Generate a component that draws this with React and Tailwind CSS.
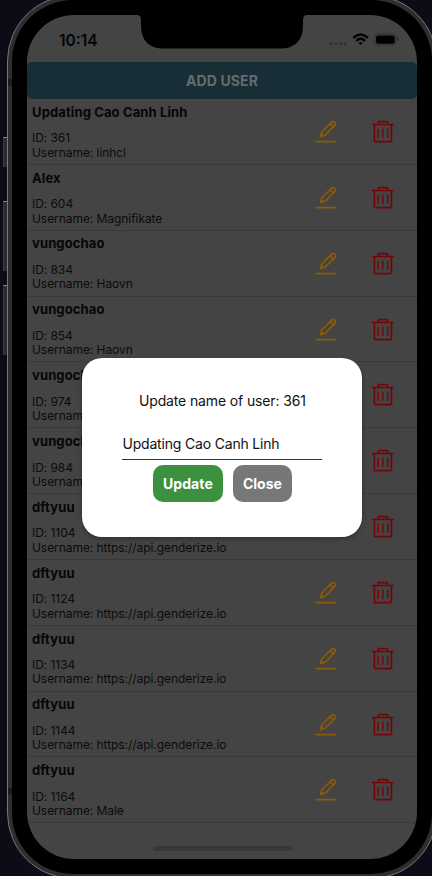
import React from "react";

const users = [
  { name: "Updating Cao Canh Linh", id: 361, username: "linhcl" },
  { name: "Alex", id: 604, username: "Magnifikate" },
  { name: "vungochao", id: 834, username: "Haovn" },
  { name: "vungochao", id: 854, username: "Haovn" },
  { name: "vungochao", id: 974, username: "Haovn" },
  { name: "vungochao", id: 984, username: "Haovn" },
  { name: "dftyuu", id: 1104, username: "https://api.genderize.io" },
  { name: "dftyuu", id: 1124, username: "https://api.genderize.io" },
  { name: "dftyuu", id: 1134, username: "https://api.genderize.io" },
  { name: "dftyuu", id: 1144, username: "https://api.genderize.io" },
  { name: "dftyuu", id: 1164, username: "Male" },
];

function EditIcon() {
  return (
    <svg width="24" height="24" viewBox="0 0 24 24" fill="none" stroke="#8a5b08" strokeWidth="1.7" strokeLinecap="round" strokeLinejoin="round">
      <path d="M2.2 22.6H21.9" />
      <path d="M6.6 17.7L7.7 13L17.3 3.4Q19 1.9 20.7 3.3Q22.1 5 20.7 6.7L11.2 16.2Z" />
      <path d="M16.4 4.8L19.4 7.8" />
      <path d="M6.9 17.3L8.4 15.8" strokeWidth="2" />
    </svg>
  );
}

function TrashIcon() {
  return (
    <svg width="24" height="24" viewBox="0 0 24 24" fill="none" stroke="#760407" strokeWidth="1.7" strokeLinecap="round" strokeLinejoin="round">
      <path d="M1.7 5.5H22.1" />
      <path d="M7.2 5.2V3.3Q7.2 2.6 7.9 2.6H15.9Q16.6 2.6 16.6 3.3V5.2" />
      <path d="M3.4 5.5V21.7Q3.4 22.6 4.3 22.6H19.5Q20.4 22.6 20.4 21.7V5.5" />
      <path d="M7.1 10.2V18.2M11.9 10.2V18.2M16.7 10.2V18.2" strokeWidth="1.4" />
    </svg>
  );
}

function StatusBar() {
  return (
    <div className="relative flex h-[47px] items-center justify-between pl-[32px] pr-[18px] pt-[3px]">
      <span className="pt-px text-[15.5px] leading-[20px] font-semibold text-[#040404]">10:14</span>
      <div className="absolute left-[114px] top-0 h-[34px] w-[162px]">
        <svg width="170" height="34" viewBox="0 0 170 34" className="-ml-[4px] max-w-none" fill="#000">
          <path d="M0 0Q4 0 4 5V12Q5 33.5 27 33.5H143Q165 33.5 166 12V5Q166 0 170 0Z" />
        </svg>
      </div>
      <div className="flex items-center">
        <svg width="71" height="14" viewBox="0 0 71 14">
          <g fill="#343434">
            <circle cx="3.3" cy="10.7" r="1.6" />
            <circle cx="8" cy="10.7" r="1.6" />
            <circle cx="12.7" cy="10.7" r="1.6" />
            <circle cx="17.4" cy="10.7" r="1.6" />
          </g>
          <g fill="none" stroke="#000" strokeWidth="2.3">
            <path d="M25.3 4.8Q32.6 -1.9 39.9 4.8" />
            <path d="M28.1 7.8Q32.6 3.8 37.1 7.8" />
          </g>
          <path d="M30.4 9.8Q32.6 8 34.8 9.8L32.6 12Z" fill="#000" />
          <rect x="46.6" y="0.9" width="21.6" height="11.3" rx="3" fill="none" stroke="#303030" />
          <rect x="48.1" y="2.4" width="18.6" height="8.3" rx="1.7" fill="#000" />
          <path d="M69.2 4.8Q70.7 5.2 70.7 6.5Q70.7 7.8 69.2 8.2Z" fill="#2c2c2c" />
        </svg>
      </div>
    </div>
  );
}

function UserRow({ user }) {
  return (
    <div className="flex h-[65.85px] border-b border-[#3a3a3a] pl-[5px]">
      <div className="w-[267px]">
        <div className="flex h-[26px] items-center border-b border-[#404040] pt-[2px] text-[13px] font-bold tracking-[0.12px] text-[#060606]">
          {user.name}
        </div>
        <div className="pt-[6.3px] text-[12px] leading-[14.4px] tracking-[-0.06px] text-[#0b0b0b]">
          <div>ID: {user.id}</div>
          <div>Username: {user.username}</div>
        </div>
      </div>
      <div className="flex items-start gap-[33px] pl-[15px] pt-[20px]">
        <EditIcon />
        <TrashIcon />
      </div>
    </div>
  );
}

function UpdateDialog() {
  return (
    <div className="absolute left-[55.4px] top-[343px] flex h-[179px] w-[280px] flex-col items-center rounded-[20px] bg-white pt-[34px] shadow-[0_2px_4px_rgba(0,0,0,0.3)]">
      <div className="text-[14px] leading-[18px] tracking-[-0.13px] text-[#111]">
        Update name of user: 361
      </div>
      <div className="mt-[15px] flex h-[35px] w-[200px] items-center border-b border-[#333] pt-[3px] text-[14px] tracking-[-0.18px] text-[#111]">
        Updating Cao Canh Linh
      </div>
      <div className="mt-[5px] flex gap-[10px] text-[14px] font-bold text-white">
        <button className="h-[37px] w-[70px] rounded-[10px] bg-[#3c9140] pb-px tracking-[0.1px]">Update</button>
        <button className="h-[37px] w-[59px] rounded-[10px] bg-[#777] pb-px">Close</button>
      </div>
    </div>
  );
}

export default function App() {
  return (
    <div className="relative h-[876px] w-[432px] overflow-hidden bg-[#0b0c15] font-['Inter','Liberation_Sans',sans-serif]">
      <div className="absolute left-[3px] top-[137px] h-[30px] w-[5px] border-l border-t border-l-[#3c3c3e] border-t-[#8a8a8a] bg-[#2b2b2c]" />
      <div className="absolute left-[3px] top-[201px] h-[70px] w-[5px] border-l border-t border-l-[#3c3c3e] border-t-[#8a8a8a] bg-[#2b2b2c]" />
      <div className="absolute left-[3px] top-[285px] h-[70px] w-[5px] border-l border-t border-l-[#3c3c3e] border-t-[#8a8a8a] bg-[#2b2b2c]" />
      <div className="absolute -top-[5px] left-[7px] h-[884px] w-[430px] rounded-[66px] border border-[#777] bg-[#2e2e2e] p-[4px]">
        <div className="absolute left-0 top-[83px] h-[7px] w-[4px] bg-[#1d1d1d]" />
        <div className="absolute left-0 top-[792px] h-[7px] w-[4px] bg-[#1d1d1d]" />
        <div className="h-full w-full rounded-[61px] bg-black p-[15px]">
          <div className="relative h-[844px] w-[390px] overflow-hidden rounded-[47px] bg-[#444]">
            <StatusBar />
            <div className="flex h-[37px] items-center justify-center rounded-[5px] bg-[#182e36] text-[14px] font-bold tracking-[0.1px] text-[#666b6d]">
              ADD USER
            </div>
            <div>
              {users.map((user) => (
                <UserRow key={user.id} user={user} />
              ))}
            </div>
            <div className="absolute bottom-[8px] left-[126px] h-[5px] w-[139px] rounded-full bg-[#383838]" />
            <UpdateDialog />
          </div>
        </div>
      </div>
    </div>
  );
}
